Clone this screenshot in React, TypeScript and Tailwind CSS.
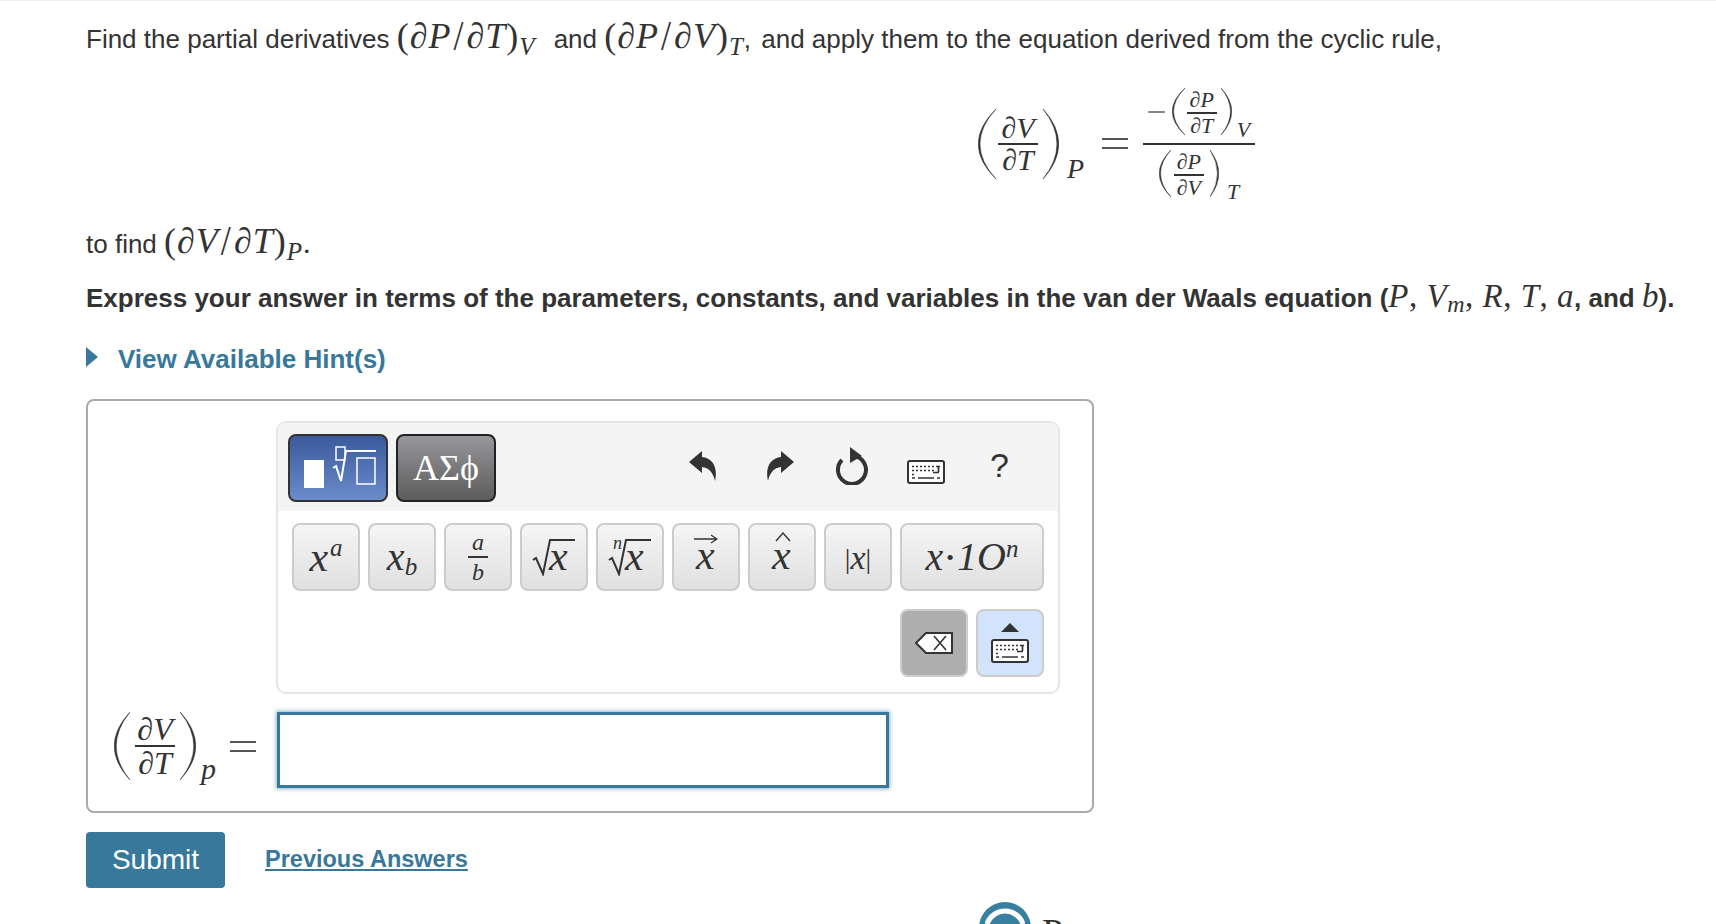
import React from "react";

const serif = "font-['Liberation_Serif',serif]";

function Paren({ side, w, h, sw = 1.8 }: { side: "l" | "r"; w: number; h: number; sw?: number }) {
  const d =
    side === "l"
      ? `M${w} 0 Q${-w + 0.5} ${h / 2} ${w} ${h} Q${2 * sw - w + 0.5} ${h / 2} ${w} 0 Z`
      : `M0 0 Q${2 * w - 0.5} ${h / 2} 0 ${h} Q${2 * w - 2 * sw - 0.5} ${h / 2} 0 0 Z`;
  return (
    <svg width={w} height={h} viewBox={`0 0 ${w} ${h}`} className="shrink-0">
      <path d={d} fill="#333" stroke="#333" strokeWidth="0.5" />
    </svg>
  );
}

function Frac({ top, bottom, size, w, gap = 0, bar = 2 }: { top: string; bottom: string; size: string; w: string; gap?: number; bar?: number }) {
  return (
    <span className={`inline-flex flex-col items-center shrink-0 ${w} ${size} ${serif} italic leading-none text-[#333]`}>
      <span style={{ paddingBottom: gap }}>{top}</span>
      <span className="w-full bg-[#333]" style={{ height: bar }} />
      <span style={{ paddingTop: gap }}>{bottom}</span>
    </span>
  );
}

function Inline({ a, b, sub }: { a: string; b: string; sub: string }) {
  return (
    <span className={`${serif} text-[36px] align-baseline tracking-[1px]`}>
      (<i>∂{a}</i>
      <span className="inline-block scale-y-[1.15] px-[2px]">/</span>
      <i>∂{b}</i>)
      <sub className="text-[25px] italic align-baseline relative top-[7px]">{sub}</sub>
    </span>
  );
}

function Key({ children, wide }: { children: React.ReactNode; wide?: boolean }) {
  return (
    <div className={`${wide ? "w-[144px]" : "w-[68px]"} h-[68px] shrink-0 rounded-[8px] border-2 border-[#cccccc] bg-gradient-to-b from-[#f5f5f5] to-[#e0e0e0] flex items-center justify-center ${serif} italic text-[#333]`}>
      {children}
    </div>
  );
}

function KeyboardIcon({ className }: { className?: string }) {
  return (
    <svg width="38" height="24" viewBox="0 0 38 24" className={className}>
      <rect x="1" y="1" width="36" height="22" rx="2" fill="#fff" stroke="#333" strokeWidth="2" />
      <path d="M5 6.5h2M9 6.5h2M13 6.5h2M17 6.5h2M21 6.5h2M25 6.5h2M29 6.5h4M5 10.5h2M9 10.5h2M13 10.5h2M17 10.5h2M21 10.5h2M25 10.5h2M31.5 6v6M26 12.5h6M5 14.5h2M5 18h3M11 18h16M30 18h3" stroke="#333" strokeWidth="1.7" fill="none" />
    </svg>
  );
}

function Radical() {
  return (
    <svg width="44" height="38" viewBox="0 0 44 38" className="absolute left-0 top-0">
      <path d="M1 22 L4 20 L11 36 L18 2 L43 2" fill="none" stroke="#333" strokeWidth="2" />
    </svg>
  );
}

export default function App() {
  return (
    <div className="h-screen w-full overflow-hidden bg-white border-t border-[#eeeeee] font-['Liberation_Sans',Arial,sans-serif] text-[#333]">
      <div className="pl-[86px]">
        <div className="mt-[15px] h-[40px] leading-[40px] text-[26px] whitespace-nowrap">
          Find the partial derivatives <Inline a="P" b="T" sub="V" />
          <span className="ml-[18px]">and</span> <Inline a="P" b="V" sub="T" />,<span className="ml-[3px]"> and apply them to the equation derived from the cyclic rule,</span>
        </div>

        <div className="ml-[892px] mt-[32px] h-[112px] flex items-center">
          <Paren side="l" w={18} h={70} />
          <Frac top="∂V" bottom="∂T" size="text-[30px]" w="w-[40px] ml-[2px] mr-[5px]" gap={0} />
          <Paren side="r" w={16} h={70} />
          <span className={`${serif} italic text-[28px] self-end mb-[17px] ml-[8px] w-[19px] leading-none`}>P</span>
          <span className="ml-[16px] flex flex-col gap-[7px] w-[26px] mb-[2px]">
            <span className="h-[2px] bg-[#555]" />
            <span className="h-[2px] bg-[#555]" />
          </span>
          <div className="ml-[15px] flex flex-col items-center w-[112px]">
            <div className="h-[55px] flex items-start">
              <span className="w-[17px] h-[2px] bg-[#888] mr-[7px] mt-[23px]" />
              <Paren side="l" w={13} h={47} sw={1.3} />
              <Frac top="∂P" bottom="∂T" size="text-[22px]" w="w-[30px] ml-[2px] mr-[4px] pt-[1px]" gap={1} bar={2} />
              <Paren side="r" w={11} h={47} sw={1.3} />
              <span className={`${serif} italic text-[22px] mt-[31px] leading-none ml-[5px]`}>V</span>
            </div>
            <span className="w-full h-[2px] bg-[#333]" />
            <div className="h-[55px] flex items-start pt-[5px]">
              <Paren side="l" w={12} h={47} sw={1.3} />
              <Frac top="∂P" bottom="∂V" size="text-[22px]" w="w-[30px] ml-[3px] mr-[6px] pt-[1px]" gap={1} bar={2} />
              <Paren side="r" w={9} h={47} sw={1.3} />
              <span className={`${serif} italic text-[22px] mt-[31px] leading-none ml-[8px]`}>T</span>
            </div>
          </div>
        </div>

        <div className="mt-[21px] h-[40px] leading-[40px] text-[26px] whitespace-nowrap">
          to find <Inline a="V" b="T" sub="P" /><span className={`${serif} text-[30px]`}>.</span>
        </div>

        <div className="mt-[15px] h-[40px] leading-[40px] text-[26px] font-bold whitespace-nowrap">
          Express your answer in terms of the parameters, constants, and variables in the van der Waals equation (
          <span className={`${serif} font-normal text-[33px] tracking-[0.5px]`}>
            <i>P</i>, <i>V</i><sub className="italic text-[24px] align-baseline relative top-[5px]">m</sub>, <i>R</i>, <i>T</i>, <i>a</i>
          </span>
          , and <span className={`${serif} font-normal italic text-[33px]`}>b</span>).
        </div>

        <div className="mt-[23px] h-[40px] flex items-center text-[#37789b] font-bold text-[26px]">
          <svg width="13" height="20" viewBox="0 0 13 20" className="mr-[19px] mb-[4px]"><path d="M0 0 L12 10 L0 20 Z" fill="#37789b" /></svg>
          View Available Hint(s)
        </div>

        <div className="mt-[20px] w-[1008px] h-[414px] border-2 border-[#aaaaaa] rounded-[8px] pt-[20px]">
          <div className="ml-[188px] w-[784px] h-[273px] border-2 border-[#e6e6e6] rounded-[10px] overflow-hidden">
            <div className="h-[88px] bg-[#f4f4f4] pl-[10px] pr-[52px] flex items-start pt-[11px]">
              <div className="w-[100px] h-[68px] rounded-[8px] border-2 border-[#333] bg-gradient-to-b from-[#3b5a9c] to-[#6a8ccb] relative">
                <div className="absolute left-[14px] top-[24px] w-[20px] h-[28px] bg-white" />
                <svg width="50" height="44" viewBox="0 0 50 44" className="absolute left-[42px] top-[10px]">
                  <rect x="4" y="1" width="9" height="13" fill="none" stroke="#fff" strokeWidth="1.5" />
                  <path d="M1 22 L4 20 L9 35 L14 5 L44 5" fill="none" stroke="#fff" strokeWidth="2" />
                  <rect x="25" y="12" width="18" height="26" fill="none" stroke="#fff" strokeWidth="1.5" />
                </svg>
              </div>
              <div className={`ml-[8px] w-[100px] h-[68px] rounded-[8px] border-2 border-[#222] bg-gradient-to-b from-[#98989c] to-[#5c5c5c] text-white text-[36px] ${serif} flex items-center justify-center`}>
                ΑΣϕ
              </div>
              <div className="ml-auto flex items-center mt-[13px]">
                <svg width="28" height="32" viewBox="0 0 28 32"><path d="M0 12 L13 1 L13 7 C24 8 29 18 26 31 C24 22 20 18 13 17 L13 23 Z" fill="#333" /></svg>
                <svg width="28" height="32" viewBox="0 0 28 32" className="ml-[49px]"><path d="M28 12 L15 1 L15 7 C4 8 -1 18 2 31 C4 22 8 18 15 17 L15 23 Z" fill="#333" /></svg>
                <svg width="34" height="38" viewBox="0 0 34 38" className="ml-[40px]">
                  <path d="M8 12 A14 14 0 1 0 20 8" fill="none" stroke="#333" strokeWidth="4" transform="translate(0,1)" />
                  <path d="M16 0 L28 9 L16 16 Z" fill="#333" />
                </svg>
                <KeyboardIcon className="ml-[39px] mt-[12px]" />
                <span className="ml-[45px] text-[34px] leading-none w-[16px] mb-[2px]">?</span>
              </div>
            </div>
            <div className="pl-[14px] pt-[12px] pr-[14px]">
              <div className="flex gap-[8px]">
                <Key><span className="text-[42px] leading-none">x</span><span className="text-[25px] relative top-[-10px] ml-[2px] leading-none">a</span></Key>
                <Key><span className="text-[40px] leading-none">x</span><span className="text-[25px] leading-none relative top-[9px]">b</span></Key>
                <Key><Frac top="a" bottom="b" size="text-[24px]" w="w-[20px]" bar={1.5} gap={2} /></Key>
                <Key><span className="relative inline-block h-[38px] w-[44px]"><Radical /><span className="absolute left-[17px] top-[0px] text-[42px] leading-[36px]">x</span></span></Key>
                <Key><span className="relative inline-block h-[38px] w-[44px]"><Radical /><span className="absolute left-[5px] top-[-4px] text-[18px] leading-none">n</span><span className="absolute left-[17px] top-[0px] text-[42px] leading-[36px]">x</span></span></Key>
                <Key><span className="relative inline-block w-[24px] h-[46px]"><svg width="24" height="10" viewBox="0 0 24 10" className="absolute left-0 top-[0px]"><path d="M0 5 H22 M17 1 L23 5 L17 9" fill="none" stroke="#333" strokeWidth="1.3" /></svg><span className="absolute left-[2px] top-[3px] text-[42px] leading-[36px]">x</span></span></Key>
                <Key><span className="relative inline-block w-[24px] h-[46px]"><svg width="16" height="10" viewBox="0 0 16 10" className="absolute left-[5px] top-[-2px]"><path d="M1 9 L8 1 L15 9" fill="none" stroke="#333" strokeWidth="1.4" /></svg><span className="absolute left-[2px] top-[3px] text-[42px] leading-[36px]">x</span></span></Key>
                <Key><span className="not-italic text-[28px] leading-none mt-[4px]">|</span><span className="text-[34px] leading-none mt-[2px]">x</span><span className="not-italic text-[28px] leading-none mt-[4px]">|</span></Key>
                <Key wide><span className="text-[40px] leading-none">x</span><span className="not-italic text-[22px] mx-[3px]">•</span><span className="text-[40px] leading-none">1O</span><span className="text-[25px] relative top-[-9px] leading-none">n</span></Key>
              </div>
              <div className="flex justify-end gap-[8px] mt-[18px]">
                <div className="w-[68px] h-[68px] rounded-[8px] border-2 border-[#cccccc] bg-[#aeaeae] flex items-center justify-center">
                  <svg width="38" height="22" viewBox="0 0 38 22"><path d="M1 11 L11 1 H37 V21 H11 Z" fill="#fff" stroke="#333" strokeWidth="2" /><path d="M19 4 L31 18 M31 4 L19 18" stroke="#333" strokeWidth="1.6" /></svg>
                </div>
                <div className="w-[68px] h-[68px] rounded-[8px] border-2 border-[#cccccc] bg-[#d2e4fb] flex flex-col items-center justify-center">
                  <svg width="18" height="9" viewBox="0 0 18 9" className="mb-[7px]"><path d="M0 9 L9 0 L18 9 Z" fill="#333" /></svg>
                  <KeyboardIcon />
                </div>
              </div>
            </div>
          </div>

          <div className="mt-[18px] flex items-start">
            <div className="w-[189px] shrink-0 pl-[26px] h-[72px] -mt-[2px] flex items-center">
              <Paren side="l" w={16} h={68} sw={2} />
              <Frac top="∂V" bottom="∂T" size="text-[32px]" w="w-[40px] mx-[5px]" gap={0} bar={2} />
              <Paren side="r" w={16} h={68} sw={2} />
              <span className={`${serif} italic text-[30px] self-end ml-[5px] leading-none mb-[-2px]`}>p</span>
              <span className="ml-[14px] flex flex-col gap-[7px] w-[26px] self-center">
                <span className="h-[2px] bg-[#555]" />
                <span className="h-[2px] bg-[#555]" />
              </span>
            </div>
            <div className="w-[612px] h-[76px] border-[3px] border-[#37789b] bg-white shadow-[0_0_4px_1px_rgba(55,120,155,0.55)]" />
          </div>
        </div>

        <div className="mt-[19px] flex items-center">
          <div className="w-[139px] h-[56px] rounded-[4px] bg-[#37789b] text-white text-[28px] flex items-center justify-center">Submit</div>
          <span className="ml-[40px] text-[#37789b] font-bold text-[23.5px] underline mb-[1px]">Previous Answers</span>
        </div>

        <div className="ml-[893px] mt-[14px] flex items-start">
          <svg width="52" height="52" viewBox="0 0 52 52">
            <circle cx="26" cy="26" r="26" fill="#37809f" />
            <path d="M8 22 A19 19 0 0 1 44 22" fill="none" stroke="#fff" strokeWidth="5" />
          </svg>
          <span className={`${serif} text-[38px] leading-none ml-[11px] mt-[11px]`}>Pearson</span>
        </div>
      </div>
    </div>
  );
}
